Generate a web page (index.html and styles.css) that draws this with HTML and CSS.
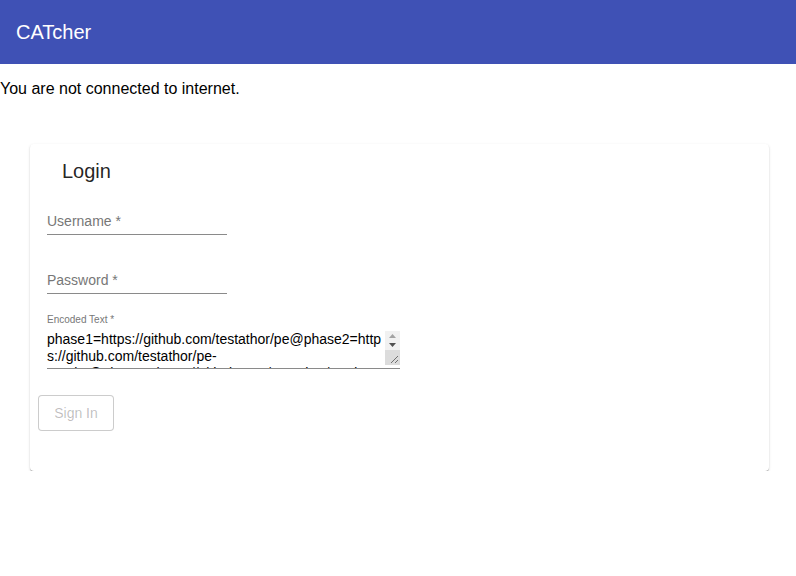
FILE: index.html
```html
<!DOCTYPE html>
<html>
<head>
<meta charset="utf-8">
<link rel="stylesheet" href="styles.css">
</head>
<body>
<header class="toolbar">CATcher</header>
<p class="offline">You are not connected to internet.</p>
<div class="card">
  <h2 class="card-title">Login</h2>
  <form class="form">
    <div class="field">
      <input class="input" type="text" placeholder="Username *">
    </div>
    <div class="field">
      <input class="input" type="password" placeholder="Password *">
    </div>
    <div class="field field-area">
      <label class="float-label">Encoded Text *</label>
      <div class="area-wrap">
        <textarea class="area" readonly>phase1=https://github.com/testathor/pe@phase2=https://github.com/testathor/pe-results@phase3=https://github.com/testathor/pe-dev-response</textarea>
        <div class="scrollbar">
          <span class="sb-btn sb-up"><svg width="15" height="10" viewBox="0 0 15 10"><polygon points="4,7 7.5,3 11,7" fill="#a3a3a3"/></svg></span>
          <span class="sb-btn sb-down"><svg width="15" height="9" viewBox="0 0 15 9"><polygon points="4,2 11,2 7.5,6" fill="#505050"/></svg></span>
          <span class="sb-grip"><svg width="15" height="15" viewBox="0 0 15 15"><path d="M13 6 L6 13 M13 10 L10 13" stroke="#6f6f6f" stroke-width="1" fill="none"/></svg></span>
        </div>
      </div>
    </div>
    <button class="btn" type="button" disabled>Sign In</button>
  </form>
</div>
</body>
</html>
```
FILE: styles.css
```css
html, body {
  margin: 0;
  padding: 0;
  background: #fff;
  font-family: "Liberation Sans", Arial, sans-serif;
  color: #000;
}
.toolbar {
  height: 64px;
  background: #3f51b5;
  color: #fff;
  font-size: 20px;
  display: flex;
  align-items: center;
  padding: 0 16px;
}
.offline {
  margin: 15px 0 0;
  font-size: 16px;
  line-height: 20px;
}
.card {
  margin: 45px 0 0 30px;
  width: 739px;
  height: 327px;
  box-sizing: border-box;
  border-radius: 4px;
  background: #fff;
  box-shadow: 0 1px 1px 0 rgba(0,0,0,.22), 0 2px 1px -1px rgba(0,0,0,.2), 0 1px 3px 0 rgba(0,0,0,.12);
  padding: 15px 16px 16px 17px;
}
.card-title {
  margin: 0 0 0 15px;
  font-size: 20px;
  font-weight: 400;
  line-height: 24px;
  color: rgba(0,0,0,.87);
}
.form {
  display: flex;
  flex-direction: column;
  align-items: flex-start;
  padding-top: 1px;
}
.field {
  margin-top: 28px;
}
.input {
  width: 180px;
  box-sizing: border-box;
  border: none;
  border-bottom: 1px solid #8a8a8a;
  outline: none;
  padding: 0 0 4px;
  font-family: inherit;
  font-size: 14px;
  line-height: 17px;
  background: transparent;
}
.field + .field { margin-top: 36px; }
.field + .field-area { margin-top: 20px; }
.input::placeholder { color: #777; }
.field-area {
  display: flex;
  flex-direction: column;
}
.float-label {
  font-size: 10px;
  line-height: 12px;
  color: #777;
}
.area-wrap {
  margin-top: 5px;
  width: 353px;
  height: 38px;
  box-sizing: border-box;
  border-bottom: 1px solid #8a8a8a;
  display: flex;
}
.area {
  flex: 1;
  min-width: 0;
  height: 37px;
  box-sizing: border-box;
  border: none;
  outline: none;
  padding: 0;
  margin: 0;
  font-family: inherit;
  font-size: 14px;
  line-height: 17px;
  color: #000;
  resize: none;
  overflow: hidden;
  background: transparent;
}
.scrollbar {
  width: 15px;
  display: flex;
  flex-direction: column;
}
.sb-btn {
  display: block;
  background: #f1f1f1;
}
.sb-up { height: 10px; }
.sb-down { height: 9px; }
.sb-btn svg, .sb-grip svg { display: block; }
.sb-grip {
  display: block;
  height: 15px;
  background: #dcdcdc;
}
.btn {
  margin: 26px 0 0 -9px;
  width: 76px;
  height: 36px;
  border: 1px solid rgba(0,0,0,.2);
  border-radius: 4px;
  background: #fff;
  font-family: inherit;
  font-size: 14px;
  color: rgba(0,0,0,.26);
  padding: 0;
}
```
